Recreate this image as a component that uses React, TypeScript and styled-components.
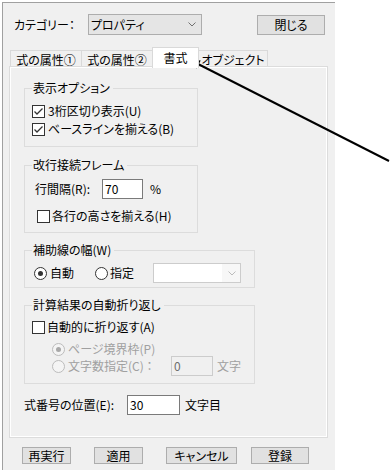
import React from "react";
import styled, { createGlobalStyle } from "styled-components";

const Global = createGlobalStyle`
  html, body { margin: 0; padding: 0; background: #ffffff; }
  body {
    font-family: "Noto Sans CJK JP", "Noto Sans", sans-serif;
    font-size: 12px;
    color: #000;
    font-feature-settings: "palt";
  }
  * { box-sizing: border-box; }
`;

const Page = styled.div`
  position: relative;
  width: 392px;
  height: 470px;
  overflow: hidden;
  padding: 2px 0 0 2px;
`;

const Dialog = styled.div`
  width: 333px;
  height: 480px;
  background: #f0f0f0;
  border-top: 1px solid #a0a0a0;
  border-left: 1px solid #a0a0a0;
  display: flex;
  flex-direction: column;
`;

const TopBar = styled.div`
  display: flex;
  align-items: center;
  height: 21px;
  margin-top: 11px;
  padding: 0 10px 0 11px;
`;

const Label = styled.span<{ $w?: number; $indent?: number; $disabled?: boolean }>`
  display: inline-block;
  flex: none;
  white-space: nowrap;
  line-height: 14px;
  ${(p) => (p.$w ? `width: ${p.$w}px;` : "")}
  margin-left: ${(p) => p.$indent ?? 0}px;
  color: ${(p) => (p.$disabled ? "#a0a0a0" : "#000")};
`;

const Combo = styled.div`
  width: 114px;
  height: 21px;
  border: 1px solid #adadad;
  background: #e5e5e5;
  display: flex;
  align-items: center;
  padding-left: 2px;
  white-space: nowrap;
`;

const Chevron = styled.svg<{ $mr: number }>`
  margin-left: auto;
  margin-right: ${(p) => p.$mr}px;
  flex: none;
`;

const Button = styled.div<{ $w: number; $h: number; $ml?: number }>`
  width: ${(p) => p.$w}px;
  height: ${(p) => p.$h}px;
  margin-left: ${(p) => p.$ml ?? 0}px;
  flex: none;
  border: 1px solid #adadad;
  background: #e1e1e1;
  display: flex;
  align-items: center;
  justify-content: center;
  white-space: nowrap;
  line-height: 14px;
`;

const CloseButton = styled(Button)`
  margin-left: auto;
`;

const TabStrip = styled.div`
  display: flex;
  align-items: flex-end;
  height: 20px;
  margin: 12px 0 0 7px;
`;

const Tab = styled.div<{ $w: number; $active?: boolean }>`
  width: ${(p) => p.$w}px;
  height: ${(p) => (p.$active ? 21 : 17)}px;
  margin-bottom: ${(p) => (p.$active ? -1 : 0)}px;
  margin-left: -1px;
  &:first-child { margin-left: 0; }
  border: 1px solid #d9d9d9;
  border-bottom: none;
  background: ${(p) => (p.$active ? "#ffffff" : "#f0f0f0")};
  ${(p) => (p.$active ? "position: relative; z-index: 2;" : "")}
  display: flex;
  align-items: center;
  justify-content: center;
  white-space: nowrap;
  line-height: 14px;
  padding-top: ${(p) => (p.$active ? 0 : 1)}px;
`;

const TabPanel = styled.div`
  margin-left: 7px;
  width: 317px;
  height: 370px;
  border: 1px solid #ffffff;
  box-shadow: 0 0 0 1px #dcdcdc;
  display: flex;
  flex-direction: column;
  align-items: flex-start;
  padding: 13px 0 0 13px;
`;

const Group = styled.fieldset<{ $w: number; $mt?: number; $pb: number }>`
  width: ${(p) => p.$w}px;
  min-width: 0;
  margin: ${(p) => p.$mt ?? 0}px 0 0 0;
  border: 1px solid #dcdcdc;
  padding: 0 0 ${(p) => p.$pb}px 7px;
  display: flex;
  flex-direction: column;
  align-items: flex-start;
`;

const Legend = styled.legend`
  padding: 0 3px 0 1px;
  line-height: 14px;
  height: 14px;
  white-space: nowrap;
`;

const Row = styled.div<{ $h: number; $mt?: number; $indent?: number }>`
  display: flex;
  align-items: center;
  height: ${(p) => p.$h}px;
  margin-top: ${(p) => p.$mt ?? 0}px;
  padding-left: ${(p) => p.$indent ?? 0}px;
  white-space: nowrap;
`;

const Box = styled.span<{ $disabled?: boolean }>`
  width: 13px;
  height: 13px;
  flex: none;
  border: 1px solid ${(p) => (p.$disabled ? "#bcbcbc" : "#333333")};
  background: #ffffff;
  display: flex;
  align-items: center;
  justify-content: center;
`;

const Circle = styled(Box)`
  border-radius: 50%;
  background: ${(p) => (p.$disabled ? "#f4f4f4" : "#ffffff")};
`;

const Dot = styled.span<{ $disabled?: boolean }>`
  width: 5px;
  height: 5px;
  border-radius: 50%;
  background: ${(p) => (p.$disabled ? "#a8a8a8" : "#333333")};
`;

const Option = styled.span<{ $w?: number; $gap: number }>`
  display: inline-flex;
  align-items: center;
  gap: ${(p) => p.$gap}px;
  ${(p) => (p.$w ? `width: ${p.$w}px;` : "")}
  flex: none;
  white-space: nowrap;
  line-height: 14px;
`;

const TextField = styled.div<{ $w: number; $disabled?: boolean; $ml?: number }>`
  width: ${(p) => p.$w}px;
  height: 20px;
  flex: none;
  margin-left: ${(p) => p.$ml ?? 0}px;
  border: 1px solid ${(p) => (p.$disabled ? "#cccccc" : "#7a7a7a")};
  background: ${(p) => (p.$disabled ? "#f0f0f0" : "#ffffff")};
  color: ${(p) => (p.$disabled ? "#6d6d6d" : "#000")};
  display: flex;
  align-items: center;
  padding-left: 2px;
  line-height: 14px;
`;

const DisabledSelect = styled.div<{ $ml: number }>`
  width: 88px;
  height: 20px;
  margin-left: ${(p) => p.$ml}px;
  flex: none;
  border: 1px solid #cccccc;
  background: #f7f7f7;
  display: flex;
  align-items: center;
`;

const SelectField = styled.span`
  width: 68px;
  height: 100%;
  background: #ffffff;
  flex: none;
`;

const Suffix = styled.span<{ $ml: number; $disabled?: boolean }>`
  margin-left: ${(p) => p.$ml}px;
  color: ${(p) => (p.$disabled ? "#a0a0a0" : "#000")};
  line-height: 14px;
  white-space: nowrap;
`;

const FooterRow = styled.div`
  display: flex;
  align-items: center;
  margin-top: 10px;
  padding-left: 19px;
`;

const ArrowLayer = styled.svg`
  position: absolute;
  left: 0;
  top: 0;
  pointer-events: none;
`;

const Check: React.FC<{ checked?: boolean }> = ({ checked }) => (
  <Box>
    {checked && (
      <svg width="11" height="11" viewBox="0 0 11 11">
        <polyline points="1.5,5.5 4,8 9.5,2.5" fill="none" stroke="#333" strokeWidth="1.3" />
      </svg>
    )}
  </Box>
);

const Radio: React.FC<{ checked?: boolean; disabled?: boolean }> = ({ checked, disabled }) => (
  <Circle $disabled={disabled}>{checked && <Dot $disabled={disabled} />}</Circle>
);

const Down: React.FC<{ color: string; mr: number }> = ({ color, mr }) => (
  <Chevron $mr={mr} width="8" height="5" viewBox="0 0 8 5">
    <polyline points="0.5,0.5 4,4 7.5,0.5" fill="none" stroke={color} strokeWidth="1" />
  </Chevron>
);

export default function App() {
  return (
    <Page>
      <Global />
      <Dialog>
        <TopBar>
          <Label $w={74}>カテゴリー：</Label>
          <Combo>
            プロパティ
            <Down color="#707070" mr={5} />
          </Combo>
          <CloseButton $w={68} $h={20}>閉じる</CloseButton>
        </TopBar>

        <TabStrip>
          <Tab $w={72}>式の属性①</Tab>
          <Tab $w={72}>式の属性②</Tab>
          <Tab $w={47} $active>書式</Tab>
          <Tab $w={70}>オブジェクト</Tab>
        </TabStrip>

        <TabPanel>
          <Group $w={174} $pb={8}>
            <Legend>表示オプション</Legend>
            <Row $h={18} $mt={7}>
              <Option $gap={3}>
                <Check checked />
                3桁区切り表示(U)
              </Option>
            </Row>
            <Row $h={18}>
              <Option $gap={3}>
                <Check checked />
                ベースラインを揃える(B)
              </Option>
            </Row>
          </Group>

          <Group $w={174} $mt={11} $pb={7}>
            <Legend>改行接続フレーム</Legend>
            <Row $h={20} $mt={7} $indent={3}>
              <Label $w={67}>行間隔(R):</Label>
              <TextField $w={41}>70</TextField>
              <Suffix $ml={7}>%</Suffix>
            </Row>
            <Row $h={18} $mt={8} $indent={5}>
              <Option $gap={2}>
                <Check />
                各行の高さを揃える(H)
              </Option>
            </Row>
          </Group>

          <Group $w={231} $mt={10} $pb={4}>
            <Legend>補助線の幅(W)</Legend>
            <Row $h={20} $mt={6} $indent={2}>
              <Option $w={61} $gap={3}>
                <Radio checked />
                自動
              </Option>
              <Option $w={58} $gap={2}>
                <Radio />
                指定
              </Option>
              <DisabledSelect $ml={0}>
                <SelectField />
                <Down color="#bcbcbc" mr={4} />
              </DisabledSelect>
            </Row>
          </Group>

          <Group $w={231} $mt={10} $pb={7}>
            <Legend>計算結果の自動折り返し</Legend>
            <Row $h={18} $mt={6}>
              <Option $gap={2}>
                <Check />
                自動的に折り返す(A)
              </Option>
            </Row>
            <Row $h={14} $mt={6} $indent={20}>
              <Option $gap={3}>
                <Radio checked disabled />
                <Label $disabled>ページ境界枠(P)</Label>
              </Option>
            </Row>
            <Row $h={20} $indent={20}>
              <Option $w={119} $gap={3}>
                <Radio disabled />
                <Label $disabled>文字数指定(C) ：</Label>
              </Option>
              <TextField $w={42} $disabled>0</TextField>
              <Suffix $ml={4} $disabled>文字</Suffix>
            </Row>
          </Group>

          <Row $h={20} $mt={11}>
            <Label $w={103}>式番号の位置(E):</Label>
            <TextField $w={53}>30</TextField>
            <Suffix $ml={5}>文字目</Suffix>
          </Row>
        </TabPanel>

        <FooterRow>
          <Button $w={49} $h={17}>再実行</Button>
          <Button $w={49} $h={17} $ml={23}>適用</Button>
          <Button $w={71} $h={17} $ml={23}>キャンセル</Button>
          <Button $w={58} $h={17} $ml={14}>登録</Button>
        </FooterRow>
      </Dialog>

      <ArrowLayer width={392} height={470}>
        <line x1={389} y1={161} x2={198} y2={64} stroke="#000" strokeWidth={2} />
        <polygon points="188,59 196.5,68.6 200.7,60.6" fill="#000" />
      </ArrowLayer>
    </Page>
  );
}
